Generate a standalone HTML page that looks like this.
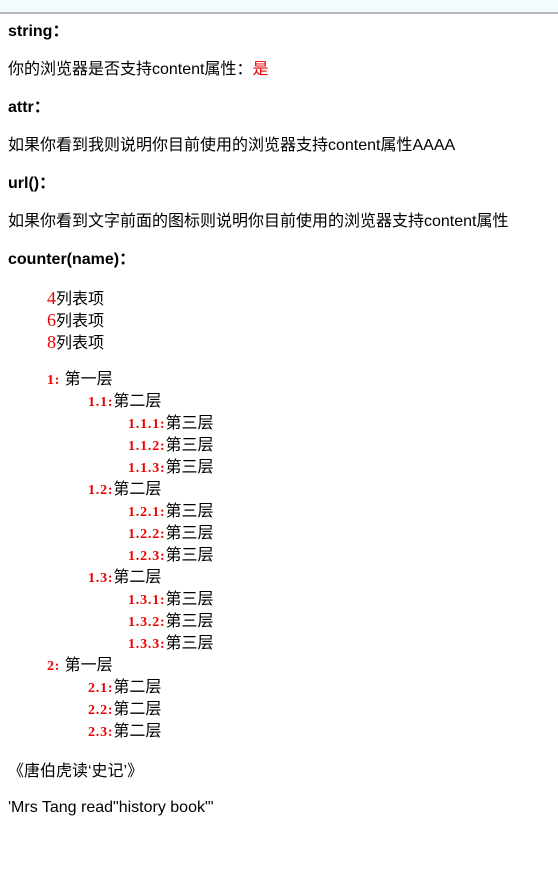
<!DOCTYPE html>
<html><head><meta charset="utf-8"><style>
body{margin:0;width:558px;height:870px;background:#fff;position:relative;overflow:hidden;font-family:"Liberation Sans","Noto Sans CJK SC",sans-serif;font-size:16px;color:#000}
.top{position:absolute;left:0;top:0;width:558px;height:12px;background:#f2fbfd;border-bottom:2px solid #b5b9ba}
.l{position:absolute;line-height:20px;white-space:nowrap}
.b{font-weight:bold}
.r{color:#e00}
.n{color:#e00;font-family:"Liberation Serif",serif;font-weight:bold;font-size:14px;letter-spacing:0.8px}
.n2{color:#e00;font-family:"Liberation Serif",serif;font-size:18px}
</style></head><body>
<div class="top"></div>
<div class="l b" style="left:8px;top:22px">string：</div>
<div class="l" style="left:8px;top:60px">你的浏览器是否支持content属性：<span class="r">是</span></div>
<div class="l b" style="left:8px;top:98px">attr：</div>
<div class="l" style="left:8px;top:136px">如果你看到我则说明你目前使用的浏览器支持content属性AAAA</div>
<div class="l b" style="left:8px;top:174px">url()：</div>
<div class="l" style="left:8px;top:212px">如果你看到文字前面的图标则说明你目前使用的浏览器支持content属性</div>
<div class="l b" style="left:8px;top:250px">counter(name)：</div>
<div class="l" style="left:47px;top:288px"><span class="n2">4</span>列表项</div>
<div class="l" style="left:47px;top:310px"><span class="n2">6</span>列表项</div>
<div class="l" style="left:47px;top:332px"><span class="n2">8</span>列表项</div>
<div class="l" style="left:47px;top:370px"><span class="n">1: </span> 第一层</div>
<div class="l" style="left:88px;top:392px"><span class="n">1.1:</span>第二层</div>
<div class="l" style="left:128px;top:414px"><span class="n">1.1.1:</span>第三层</div>
<div class="l" style="left:128px;top:436px"><span class="n">1.1.2:</span>第三层</div>
<div class="l" style="left:128px;top:458px"><span class="n">1.1.3:</span>第三层</div>
<div class="l" style="left:88px;top:480px"><span class="n">1.2:</span>第二层</div>
<div class="l" style="left:128px;top:502px"><span class="n">1.2.1:</span>第三层</div>
<div class="l" style="left:128px;top:524px"><span class="n">1.2.2:</span>第三层</div>
<div class="l" style="left:128px;top:546px"><span class="n">1.2.3:</span>第三层</div>
<div class="l" style="left:88px;top:568px"><span class="n">1.3:</span>第二层</div>
<div class="l" style="left:128px;top:590px"><span class="n">1.3.1:</span>第三层</div>
<div class="l" style="left:128px;top:612px"><span class="n">1.3.2:</span>第三层</div>
<div class="l" style="left:128px;top:634px"><span class="n">1.3.3:</span>第三层</div>
<div class="l" style="left:47px;top:656px"><span class="n">2: </span> 第一层</div>
<div class="l" style="left:88px;top:678px"><span class="n">2.1:</span>第二层</div>
<div class="l" style="left:88px;top:700px"><span class="n">2.2:</span>第二层</div>
<div class="l" style="left:88px;top:722px"><span class="n">2.3:</span>第二层</div>
<div class="l" style="left:8px;top:762px">《唐伯虎读‘史记’》</div>
<div class="l" style="left:8px;top:798px">'Mrs Tang read"history book"'</div>
</body></html>
